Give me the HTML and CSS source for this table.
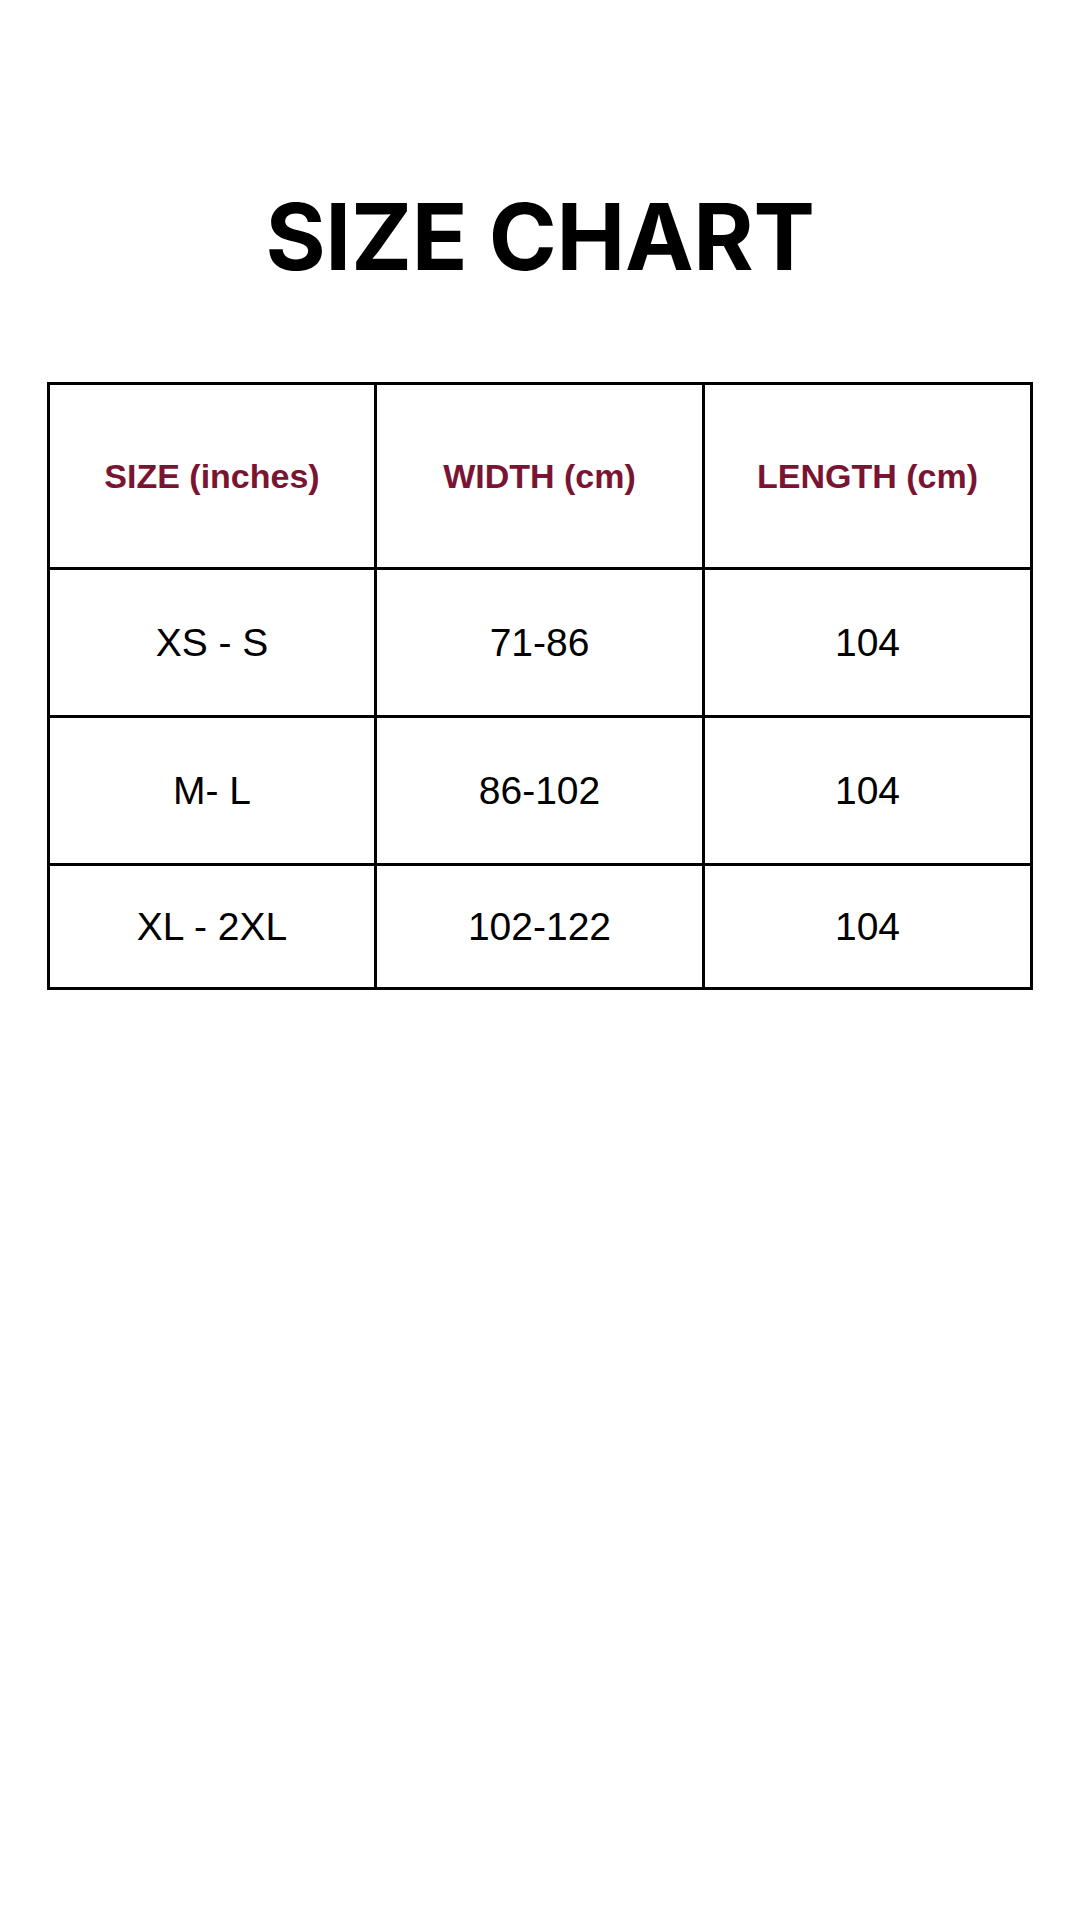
FILE: index.html
```html
<!DOCTYPE html>
<html lang="en">
<head>
<meta charset="utf-8">
<title>Size Chart</title>
<link rel="stylesheet" href="styles.css">
</head>
<body>
<main class="page">
  <h1 class="title">SIZE CHART</h1>
  <div class="chart">
    <div class="cell head">SIZE (inches)</div>
    <div class="cell head">WIDTH (cm)</div>
    <div class="cell head">LENGTH (cm)</div>
    <div class="cell">XS - S</div>
    <div class="cell">71-86</div>
    <div class="cell">104</div>
    <div class="cell">M- L</div>
    <div class="cell">86-102</div>
    <div class="cell">104</div>
    <div class="cell">XL - 2XL</div>
    <div class="cell">102-122</div>
    <div class="cell">104</div>
  </div>
</main>
</body>
</html>
```
FILE: styles.css
```css
html, body {
  margin: 0;
  padding: 0;
  background: #ffffff;
}
.page {
  width: 1080px;
  height: 1920px;
  padding-top: 189px;
  box-sizing: border-box;
}
.title {
  margin: 0;
  font-family: Inter, "Liberation Sans", sans-serif;
  font-weight: 700;
  font-size: 92px;
  line-height: 96px;
  text-align: center;
  color: #000;
  letter-spacing: -0.3px;
}
.chart {
  margin: 97px 47px 0 47px;
  display: grid;
  grid-template-columns: 324fr 325fr 325fr;
  grid-template-rows: 182px 145px 145px 121px;
  gap: 3px;
  padding: 3px;
  background: #000;
}
.cell {
  background: #fff;
  display: flex;
  align-items: center;
  justify-content: center;
  font-family: "Liberation Sans", Arial, sans-serif;
  font-size: 39px;
  color: #000;
}
.cell.head {
  font-weight: 700;
  font-size: 34px;
  color: #7a1433;
}
```
